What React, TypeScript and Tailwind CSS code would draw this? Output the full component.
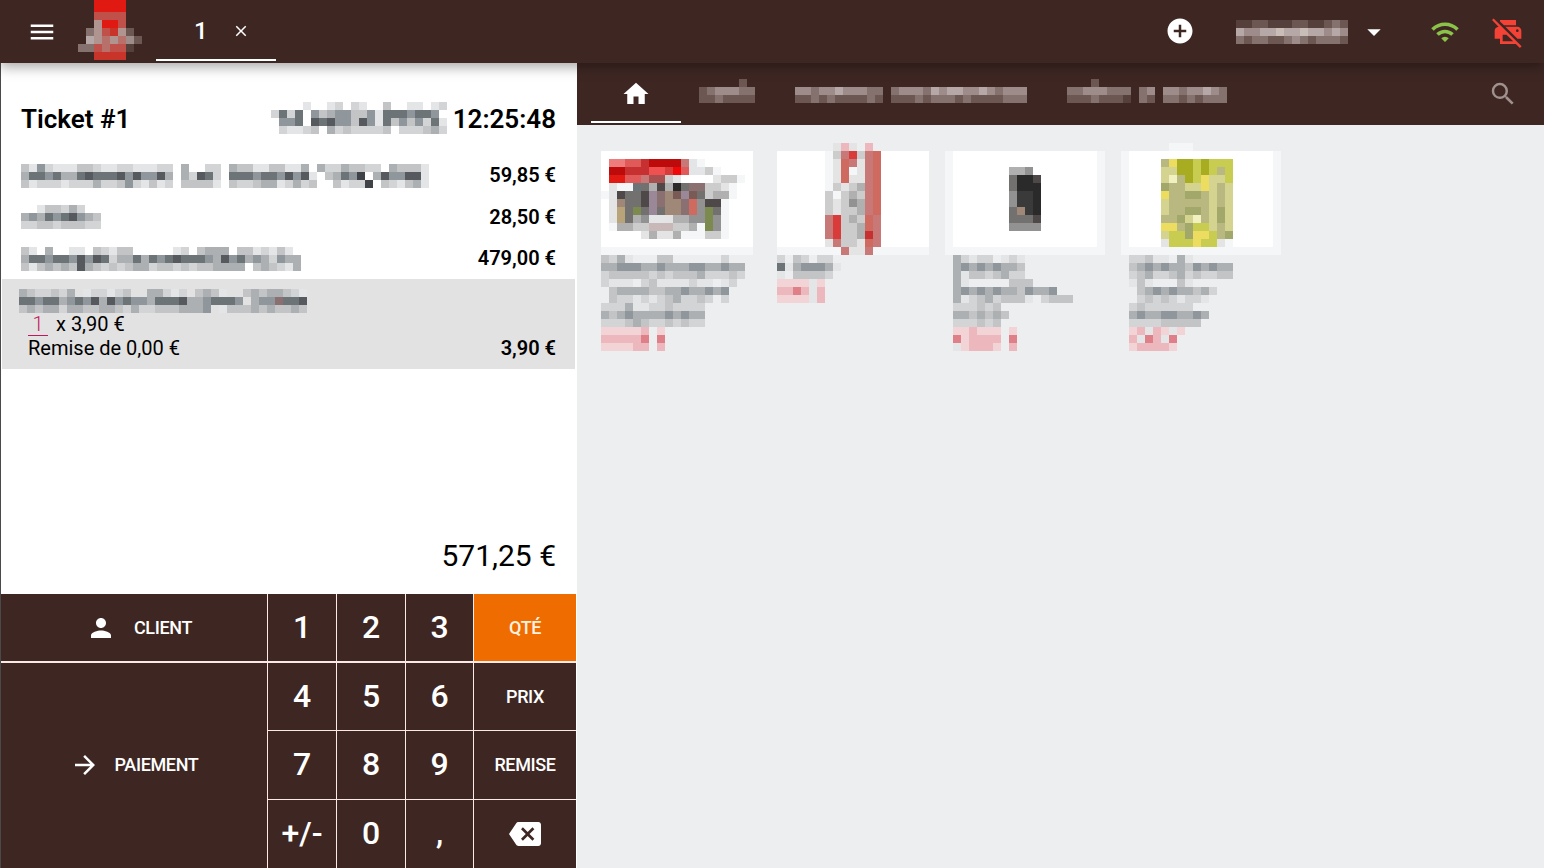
import React from 'react';
import {
  MdAddCircle,
  MdArrowDropDown,
  MdArrowForward,
  MdBackspace,
  MdClose,
  MdHome,
  MdMenu,
  MdPerson,
  MdPrintDisabled,
  MdSearch,
  MdWifi,
} from 'react-icons/md';

// colours of the pixelated (censored) areas in the screenshot
const palette: Record<string, string> = {
  w: '#ffffff', a: '#f5f6f7', b: '#e4e4e4', c: '#cccccc', d: '#b0b0b0', e: '#929292', f: '#737070', g: '#4e4848', h: '#2a2a2a', i: '#3a3a3a',
  R: '#bd0a0a', r: '#d93a3a', p: '#ee7c7c', s: '#c97878', P: '#cf6a60',
  W: '#e05a5a', X: '#c63030', Z: '#f05050', u: '#f00808', t: '#a85050',
  n: '#a08878', x: '#7c8a50', k: '#b8a478', N: '#c8b8b8', O: '#8a7070', Q: '#9a8898', S: '#7a5a55',
  y: '#c8cc50', o: '#a8ac20', l: '#d4d490', m: '#b8b880', Y: '#ecdc60', v: '#a2a86a', q: '#f0f0c0',
  A: '#e3e5e7', B: '#d2d4d6', C: '#c2c4c6', D: '#adb0b2', E: '#8f979c', F: '#6d7478', G: '#565a5e', H: '#3f4348',
  T: '#f2d3d6', U: '#ecb8bd', V: '#df8088',
  '1': '#56403c', '2': '#6d5753', '3': '#85716d', '4': '#9d8c89', '5': '#b5a8a6', '6': '#c9bdb8',
  j: '#e01a12', J: '#c8342a', K: '#c0504a', L: '#b8706a', M: '#b09490',
};

const Mosaic: React.FC<{ rows: string[]; className?: string }> = ({ rows, className }) => {
  const cols = Math.max(...rows.map((r) => r.length));
  return (
    <svg width={cols * 8} height={rows.length * 8} shapeRendering="crispEdges" className={'block shrink-0 ' + (className ?? '')}>
      {rows.map((row, y) =>
        row.split('').map((ch, x) =>
          palette[ch] ? <rect key={x + '-' + y} x={x * 8} y={y * 8} width={8} height={8} fill={palette[ch]} /> : null,
        ),
      )}
    </svg>
  );
};

const logo = ['..jjjj..', '..jjjj..', '..KKKK..', '..MjjK..', '.3MKJM2.', '.5MLML42', '33KLKK1.', '..JJJJ..'];
const user = ['11221112211232', '54455655655454', '32332234323332'];
const dateRows = [
  '....A..AB.BA..C..AA.AB',
  'BFBF.ECDEECCEAFFFEFFE.',
  '.EEF.GFGEECGEAFCECEBFA',
  '.BAABC.DBCBBBBC.BBBCDB',
];

const ticketRows = [
  {
    price: '59,85 €',
    height: 'h-[41px]',
    priceClass: 'pb-[2px]',
    rows: [
      'CAEBAAACCBAABBAAABB.D..BB.DCCAACCAAD.DBBDCCBB.DCCCA',
      'DFFEFDDFGFFFGEGEEGD.DBGFB.FFFEFFEGEGA.CDFEH.DGEEGGA',
      'CABBBABBBDBBCEBACAB.CCCCA.CBBCDDABDBC..CABBH.CBACDA',
    ],
  },
  {
    price: '28,50 €',
    height: 'h-[42px]',
    priceClass: '',
    rows: ['..ACCBDB..', 'DEDFEFGEDC', 'BBCCBCCCBB'],
  },
  {
    price: '479,00 €',
    height: 'h-[41px]',
    priceClass: 'pb-[2px]',
    rows: [
      'CA.D..AA.CBACC.....AB.CDDD.CCABACA',
      'DFFEFFEGEGFBDDFDFEFGFFFEDGEFDEDBEDD',
      'CACDCDCGDCBCBCDDBCCBCBCCDDDD.CDCBAD',
    ],
  },
];

const selectedRows = [
  'DCBBCBD.ABBABC..DDBAB.CDCA..CDCDDCBA',
  'FFEFFDEFEGDGEFEEDFFFGDDEFFFE.DEEOFFG',
  'CDCDDBDDCCDDCBDBBCCCDDDE.ACCCDCDCCDC',
];

type Product = { image: string[]; text: string[] };

const white = '.wwwwwwwwwwwwwwwwwww';
const fade = '.aaaaaaaaaaaaaaaaaaa';
const whiteNarrow = 'awwwwwwwwwwwwwwwwwwa';
const fadeNarrow = 'aaaaaaaaaaaaaaaaaaaa';

const products: Product[] = [
  {
    image: [
      '',
      white,
      '.wppWWXRRRRsAawwwwww',
      '.wRRXXXZZruWAAcawwww',
      '.wjjWWsttcAwwwwbccaw',
      '.wbaaFfdgdhfOOccbaww',
      '.aAgffgQOnSQSfcddaww',
      '.wbnffgQOnnOPeggawww',
      '.wbkfxfQfnnOPexfawww',
      '.wbkfdeAAbddeexeawww',
      '.waddccNNNccdaxeawww',
      '.wwwwwbdbbdaaaccawww',
      white,
      fade,
    ],
    text: [
      '.CBDA...CC......B..',
      '.DDEEEDDEDDDEEDDEDD',
      '.BCCCCCBCBCCCDBBBCB',
      '.BAAA.BCAAAABAA.AB.',
      '..CDDDDCCDDEDDEDE..',
      '..CBBABABCDBBCB.B..',
      '.BBBDAABBCBBBB.....',
      '.DCDEDDDDEDEDD.....',
      '.BBBCDCBBCBCBB.....',
      '.TTTTTU.T',
      '.UUUUUV.V',
      '.TTTTUU.U',
    ],
  },
  {
    image: [
      '........bUb.U',
      '.wwwwwwacsrcsPwwwwww',
      '.wwwwwwabPsbsPwwwwww',
      '.wwwwwwabPabsPwwwwww',
      '.wwwwwwabPbbsPwwwwww',
      '.wwwwwwacbcdsPwwwwww',
      '.wwwwwwcacdcsPwwwwww',
      '.wwwwwwcbcedsPwwwwww',
      '.wwwwwwcbccdsPwwwwww',
      '.wwwwwwsrcdcPswwwwww',
      '.wwwwwwsrccdPswwwwww',
      '.wwwwwwsrccdXswwwwww',
      '.wwwwwwbsccbPswwwwww',
      '.aaaaaaaasbbsaaaaaaa',
    ],
    text: [
      '.B.CB.BB',
      '.FADEEEDA',
      '.A.CCCCB',
      '.TTTTAT',
      '.UUVUAU',
      '.TTTTAU',
    ],
  },
  {
    image: [
      '',
      whiteNarrow,
      whiteNarrow,
      'awwwwwwwddewwwwwwwwa',
      'awwwwwwwfhhgwwwwwwwa',
      'awwwwwwwfhhhwwwwwwwa',
      'awwwwwwweiihwwwwwwwa',
      'awwwwwwweiihwwwwwwwa',
      'awwwwwwwfnihwwwwwwwa',
      'awwwwwwwfffgwwwwwwwa',
      'awwwwwwweeeewwwwwwwa',
      whiteNarrow,
      whiteNarrow,
      fadeNarrow,
    ],
    text: [
      '.DBABB.ABA',
      '.DEDEDEDDC',
      '.DACCBCDBB',
      '.DA.....CCC',
      '.DEDEDEDDCEDDE',
      '.DABCDBCCCA.BCCC',
      '.BBBCBC',
      '.DDCDCDC',
      '.BBBCBC',
      '.TTUTTT.T',
      '.VTUUUU.V',
      '.ATUUUT.U',
    ],
  },
  {
    image: [
      '......aaa',
      whiteNarrow,
      'awwwwmYooyoyyywwwwwa',
      'awwwwllooyoymywwwwwa',
      'awwwwlqmoyYllywwwwwa',
      'awwwwvmmllYlmlwwwwwa',
      'awwwwYmmvvmlmlwwwwwa',
      'awwwwlmmmmmlmlwwwwwa',
      'awwwwlmmvvmlvlwwwwwa',
      'awwwwmmvlqmlvlwwwwwa',
      'awwwwYYmvyylmlwwwwwa',
      'awwwwlyyvYYymvwwwwwa',
      'awwwwbyyyYyybawwwwwa',
      fadeNarrow,
    ],
    text: [
      '.BBCAA.DA',
      '.CDEDEDDCEDEDD',
      '.BCDBBCDBCBBCC',
      '.ACA...CA',
      '..CDEDEDDCDB',
      '..BCBCBABBA',
      '.BCBBBBBB',
      '.DEDDEEDDED',
      '.BBBBCCCCC',
      '.TUAUTAT',
      '.UAVUAV',
      '.TUUUUT',
    ],
  },
];

const textCell = 'flex items-center justify-center bg-[#3e2723] text-white text-[18px] font-medium tracking-[-0.02em]';
const digit = 'flex items-center justify-center bg-[#3e2723] pb-[2px] text-white text-[32px] font-medium';

const Keypad: React.FC = () => (
  <div className="grid grid-cols-[266px_68px_68px_67px_102px] grid-rows-[68px_67px_68px_68px] gap-px bg-[#fbe9e7]">
    <div className={textCell + ' border-b border-[#fbe9e7] gap-[18px] pl-[10px]'}>
      <MdPerson size={30} />
      <span>CLIENT</span>
    </div>
    <div className={digit + ' border-b border-[#fbe9e7]'}>1</div>
    <div className={digit + ' border-b border-[#fbe9e7]'}>2</div>
    <div className={digit + ' border-b border-[#fbe9e7]'}>3</div>
    <div className="flex items-center justify-center bg-[#ef6c00] border-b border-[#fbe9e7] text-[#fff3e0] text-[18px] font-medium tracking-[-0.02em]">QTÉ</div>

    <div className={textCell + ' row-span-3 gap-[15px] pb-[2px]'}>
      <MdArrowForward size={30} />
      <span>PAIEMENT</span>
    </div>
    <div className={digit}>4</div>
    <div className={digit}>5</div>
    <div className={digit}>6</div>
    <div className={textCell}>PRIX</div>
    <div className={digit}>7</div>
    <div className={digit}>8</div>
    <div className={digit}>9</div>
    <div className={textCell + ' pb-[2px]'}>REMISE</div>
    <div className={digit}>+/-</div>
    <div className={digit}>0</div>
    <div className={digit}>,</div>
    <div className={textCell}>
      <MdBackspace size={32} />
    </div>
  </div>
);

const Ticket: React.FC = () => (
  <div className="flex w-[577px] shrink-0 flex-col border-l border-[#4a4a4a] bg-white pr-px">
    <div className="flex h-[92px] shrink-0 items-center justify-between pl-[20px] pr-[20px] pt-[20px] text-[26px] font-semibold text-black">
      <span>Ticket #1</span>
      <div className="flex items-center gap-[6px]">
        <Mosaic rows={dateRows} className="-mt-[2px]" />
        <span>12:25:48</span>
      </div>
    </div>
    <div className="flex flex-1 flex-col">
      {ticketRows.map((row) => (
        <div key={row.price} className={'mx-px flex items-center justify-between pl-[19px] pr-[19px] ' + row.height}>
          <Mosaic rows={row.rows} />
          <span className={'text-[20px] font-semibold text-black ' + row.priceClass}>{row.price}</span>
        </div>
      ))}
      <div className="mx-px flex h-[90px] flex-col bg-[#e2e2e2] pl-[19px] pr-[19px] pt-[10px] text-[20px] leading-[24px] text-black">
        <Mosaic rows={selectedRows} className="-ml-[2px]" />
        <div className="-mt-px flex pl-[7px]">
          <span className="h-[24px] w-[20px] border-b border-[#c2185b] text-center text-[#c2185b] font-light">1</span>
          <span className="ml-[8px]">x 3,90 €</span>
        </div>
        <div className="flex justify-between pl-[7px]">
          <span>Remise de 0,00 €</span>
          <span className="font-semibold">3,90 €</span>
        </div>
      </div>
    </div>
    <div className="flex h-[78px] shrink-0 items-center justify-end pr-[20px] text-[30px] text-black">571,25 €</div>
    <Keypad />
  </div>
);

const Catalog: React.FC = () => (
  <div className="flex min-w-0 flex-1 flex-col bg-[#eceef0]">
    <div className="flex h-[62px] shrink-0 items-center bg-[#3e2723] pl-[14px] pr-[26px]">
      <div className="flex h-[60px] w-[90px] items-center justify-center self-start border-b-2 border-white pt-[4px] text-white">
        <MdHome size={30} />
      </div>
      <Mosaic className="ml-[18px] -mt-[6px]" rows={['.....2.', '2344433', '2232222']} />
      <Mosaic className="ml-[40px] -mt-[6px]" rows={['.............................', '44344544433.34443545544543444', '22323222232.22232333232222333']} />
      <Mosaic className="ml-[40px] -mt-[6px]" rows={['...2................', '33444333.34.44344543', '22232221.32.33232333']} />
      <MdSearch size={30} className="ml-auto text-[#a1918e]" />
    </div>
    <div className="flex pl-[16px] pt-[18px]">
      {products.map((product, i) => (
        <div key={i} className="w-[176px] shrink-0">
          <Mosaic rows={product.image} className="h-[112px]" />
          <Mosaic rows={product.text} />
        </div>
      ))}
    </div>
  </div>
);

const App: React.FC = () => (
  <div className="flex h-[868px] w-full flex-col overflow-hidden bg-white font-[Roboto,sans-serif]">
    <header className="relative z-10 flex h-[63px] shrink-0 items-center overflow-hidden bg-[#3e2723] pl-[27px] pr-[20px] text-white shadow-[0_4px_12px_rgba(0,0,0,0.35)]">
      <MdMenu size={30} />
      <Mosaic rows={logo} className="ml-[21px] -mt-[4px] self-start" />
      <div className="ml-[14px] flex h-[61px] w-[120px] items-center self-start border-b-2 border-white pl-[38px] pt-[2px] text-[24px] font-medium">
        <span className="w-[38px]">1</span>
        <MdClose size={18} />
      </div>
      <MdAddCircle size={30} className="ml-auto -mt-px" />
      <Mosaic rows={user} className="ml-[41px]" />
      <MdArrowDropDown size={32} className="ml-[10px]" />
      <MdWifi size={30} className="ml-[40px] text-[#8bc34a]" />
      <MdPrintDisabled size={32} className="ml-[32px] text-[#f44336]" />
    </header>
    <div className="flex min-h-0 flex-1">
      <Ticket />
      <Catalog />
    </div>
  </div>
);

export default App;
